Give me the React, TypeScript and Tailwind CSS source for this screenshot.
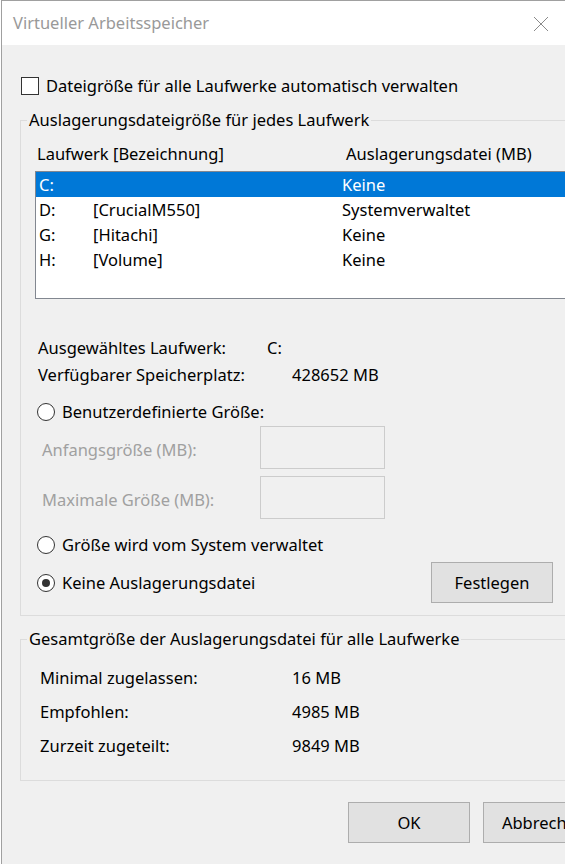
import React from "react";

const drives = [
  { drive: "C:", label: "", size: "Keine", selected: true },
  { drive: "D:", label: "[CrucialM550]", size: "Systemverwaltet", selected: false },
  { drive: "G:", label: "[Hitachi]", size: "Keine", selected: false },
  { drive: "H:", label: "[Volume]", size: "Keine", selected: false },
];

function Radio({ checked, label }: { checked?: boolean; label: string }) {
  return (
    <div className="flex h-[24px] items-center gap-[7px]">
      <span className="flex h-[18px] w-[18px] shrink-0 items-center justify-center rounded-full border border-[#333] bg-white">
        {checked && <span className="h-[8px] w-[8px] rounded-full bg-[#333]" />}
      </span>
      <span>{label}</span>
    </div>
  );
}

function DialogButton({ children }: { children: React.ReactNode }) {
  return (
    <button className="flex h-[41px] w-[122px] shrink-0 items-center justify-center whitespace-nowrap border border-[#adadad] bg-[#e1e1e1]">
      {children}
    </button>
  );
}

function SizeField({ label }: { label: string }) {
  return (
    <div className="flex h-[43px] items-center pl-[7px]">
      <span className="w-[218px] pt-[4px] text-[#a0a0a0]">{label}</span>
      <div className="h-[43px] w-[125px] border border-[#cccccc] bg-[#f0f0f0]" />
    </div>
  );
}

export default function App() {
  return (
    <div className="h-[864px] w-[565px] overflow-hidden bg-white pl-px font-['Noto_Sans',sans-serif] text-[16.5px] leading-[24px] text-black">
      <div className="flex h-full w-[564px] flex-col border-l border-t border-[#a0a0a0]">
        {/* title bar */}
        <div className="flex h-[44px] shrink-0 items-center justify-between bg-white pl-[11px] pr-[16px]">
          <span className="text-[#999999]">Virtueller Arbeitsspeicher</span>
          <svg width="16" height="16" viewBox="0 0 16 16" className="mt-[1px]">
            <path d="M1 1 L15 15 M15 1 L1 15" stroke="#8a8a8a" strokeWidth="1" fill="none" />
          </svg>
        </div>

        {/* content */}
        <div className="flex flex-1 flex-col bg-[#f0f0f0] pl-[18px]">
          <div className="ml-px mt-[29px] flex h-[24px] items-center gap-[7px]">
            <span className="h-[18px] w-[18px] shrink-0 border border-[#333] bg-white" />
            <span>Dateigröße für alle Laufwerke automatisch verwalten</span>
          </div>

          <fieldset className="mt-[10px] w-[600px] shrink-0 border border-[#dcdcdc] pb-[12px]">
            <legend className="ml-[6px] px-[2px]">Auslagerungsdateigröße für jedes Laufwerk</legend>
            <div className="pl-[14px]">
              <div className="mt-[10px] flex pl-[2px]">
                <span className="w-[309px]">Laufwerk [Bezeichnung]</span>
                <span>Auslagerungsdatei (MB)</span>
              </div>

              <div className="mt-[5px] h-[128px] w-[560px] border border-[#828790] bg-white">
                {drives.map((d) => (
                  <div
                    key={d.drive}
                    className={
                      "flex h-[25px] items-center " +
                      (d.selected ? "bg-[#0078d7] text-white" : "")
                    }
                  >
                    <span className="w-[57px] pl-[3px]">{d.drive}</span>
                    <span className="w-[249px]">{d.label}</span>
                    <span>{d.size}</span>
                  </div>
                ))}
              </div>

              <div className="mt-[37px] flex pl-[3px]">
                <span className="w-[229px]">Ausgewähltes Laufwerk:</span>
                <span>C:</span>
              </div>
              <div className="mt-[3px] flex pl-[3px]">
                <span className="w-[254px]">Verfügbarer Speicherplatz:</span>
                <span>428652 MB</span>
              </div>

              <div className="mt-[13px] pl-[2px]">
                <Radio label="Benutzerdefinierte Größe:" />
              </div>
              <div className="mt-[2px]">
                <SizeField label="Anfangsgröße (MB):" />
              </div>
              <div className="mt-[7px]">
                <SizeField label="Maximale Größe (MB):" />
              </div>
              <div className="mt-[14px] pl-[2px]">
                <Radio label="Größe wird vom System verwaltet" />
              </div>
              <div className="mt-[5px] flex h-[41px] items-center">
                <div className="w-[396px] pl-[2px]">
                  <Radio checked label="Keine Auslagerungsdatei" />
                </div>
                <DialogButton>Festlegen</DialogButton>
              </div>
            </div>
          </fieldset>

          <fieldset className="mt-[11px] w-[600px] shrink-0 border border-[#dcdcdc] pb-[17px]">
            <legend className="ml-[6px] px-[2px]">Gesamtgröße der Auslagerungsdatei für alle Laufwerke</legend>
            <div className="mt-[10px] pl-[19px]">
              {[
                ["Minimal zugelassen:", "16 MB"],
                ["Empfohlen:", "4985 MB"],
                ["Zurzeit zugeteilt:", "9849 MB"],
              ].map(([k, v]) => (
                <div key={k} className="flex h-[34px] items-center">
                  <span className="w-[252px]">{k}</span>
                  <span>{v}</span>
                </div>
              ))}
            </div>
          </fieldset>

          <div className="ml-[328px] mt-[21px] flex gap-[13px]">
            <DialogButton>OK</DialogButton>
            <DialogButton>Abbrechen</DialogButton>
          </div>
        </div>
      </div>
    </div>
  );
}
